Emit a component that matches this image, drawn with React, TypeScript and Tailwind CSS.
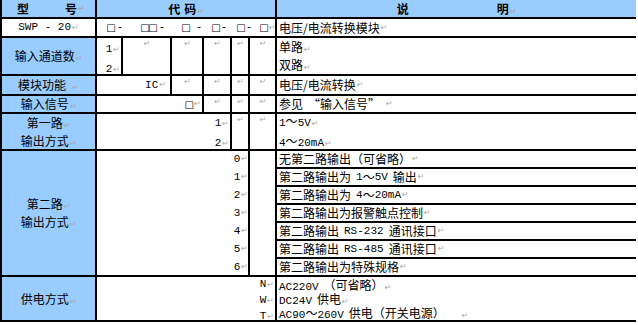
import React from 'react';

// paragraph mark, as Word shows it
const M = () => (
    <span className="font-['DejaVu_Sans'] text-[8px] leading-none text-[#a8a8a8] ml-[1px]">↵</span>
);

// latin run in the narrow typewriter face
const L = ({ children }: { children: React.ReactNode }) => (
    <span className="font-['Liberation_Mono'] text-[11px]">{children}</span>
);

const Sp = () => <span className="inline-block w-[5px]" />;

const Box = ({ className = '' }: { className?: string }) => (
    <span className={`inline-flex justify-center w-[8px] font-['DejaVu_Sans'] text-[10px] ${className}`}>□</span>
);
const Dash = ({ className = '' }: { className?: string }) => (
    <span className={`inline-flex justify-center w-[6px] font-['Liberation_Mono'] text-[11px] ${className}`}>-</span>
);

const label = 'bg-[#99ccff] flex flex-col items-center justify-center leading-[18px]';
const white = 'bg-white';
const markCell = 'bg-white flex justify-center pt-[2px] leading-[14px]';
const desc = 'bg-white flex items-center pl-[2px] whitespace-nowrap';

const secondRoute = [
    <>无第二路输出（可省略）<M /></>,
    <>第二路输出为<Sp /><L>1</L>～<L>5V</L><Sp />输出<M /></>,
    <>第二路输出为<Sp /><L>4</L>～<L>20mA</L><M /></>,
    <>第二路输出为报警触点控制<M /></>,
    <>第二路输出<Sp /><L>RS-232</L><Sp />通讯接口<M /></>,
    <>第二路输出<Sp /><L>RS-485</L><Sp />通讯接口<M /></>,
    <>第二路输出为特殊规格<M /></>,
];

export default function App() {
    return (
        <div className="w-[638px] h-[325px] bg-white font-['Noto_Sans_CJK_SC',sans-serif] text-[12px] text-black">
            <div className="w-[636px] bg-black pl-[2px] pb-[2px] grid gap-[2px] grid-cols-[93px_24px_47px_30px_26px_16px_25px_359px] grid-rows-[17px_17px_36px_18px_16px_35px_16px_16px_16px_16px_16px_16px_16px_43px]">
                {/* header */}
                <div className="bg-[#99ccff] flex items-center pl-[15px] font-bold">
                    <span>型</span>
                    <span className="ml-[36px]">号</span>
                    <M />
                </div>
                <div className="col-span-6 bg-[#99ccff] flex items-center justify-center gap-[4px] font-bold">
                    <span>代</span>
                    <span>码<M /></span>
                </div>
                <div className="bg-[#99ccff] flex items-center justify-center gap-[88px] font-bold">
                    <span>说</span>
                    <span>明<M /></span>
                </div>

                {/* SWP-20 */}
                <div className="bg-white flex items-center justify-center">
                    <L>SWP - 20</L>
                    <M />
                </div>
                <div className="col-span-6 bg-white flex items-center pl-[10px]">
                    <Box /><Dash className="ml-[2px]" />
                    <Box className="ml-[18px]" /><Box /><Dash className="ml-[2px]" />
                    <Box className="ml-[17px]" /><Dash className="ml-[6px]" />
                    <Box className="ml-[10px]" /><Dash className="ml-[1px]" />
                    <Box className="ml-[10px]" /><Dash className="ml-[1px]" />
                    <Box className="ml-[8px]" />
                    <M />
                </div>
                <div className={desc}>电压/电流转换模块<M /></div>

                {/* input channels */}
                <div className={label}><span>输入通道数<M /></span></div>
                <div className="bg-white flex flex-col items-end leading-[18px] pr-[1px]">
                    <span><L>1</L><M /></span>
                    <span><L>2</L><M /></span>
                </div>
                <div className={markCell}><M /></div>
                <div className={markCell}><M /></div>
                <div className={markCell}><M /></div>
                <div className={markCell}><M /></div>
                <div className={markCell}><M /></div>
                <div className="bg-white flex flex-col justify-center pl-[2px] leading-[18px]">
                    <span>单路<M /></span>
                    <span>双路<M /></span>
                </div>

                {/* module function */}
                <div className={label}><span>模块功能&nbsp;&nbsp;<M /></span></div>
                <div className="col-span-2 bg-white flex items-center justify-end pr-[4px]">
                    <L>IC</L><M />
                </div>
                <div className={markCell}><M /></div>
                <div className={markCell}><M /></div>
                <div className={markCell}><M /></div>
                <div className={markCell}><M /></div>
                <div className={desc}>电压/电流转换<M /></div>

                {/* input signal */}
                <div className={label}><span>输入信号<M /></span></div>
                <div className="col-span-3 bg-white flex items-center justify-end pr-[1px]">
                    <Box /><M />
                </div>
                <div className={markCell}><M /></div>
                <div className={markCell}><M /></div>
                <div className={markCell}><M /></div>
                <div className={desc}>参见<Sp />“输入信号”<Sp /><M /></div>

                {/* first output */}
                <div className={label}>
                    <span>第一路<M /></span>
                    <span>输出方式<M /></span>
                </div>
                <div className="col-span-4 bg-white flex flex-col items-end justify-center leading-[18px] pr-[1px]">
                    <span><L>1</L><M /></span>
                    <span><L>2</L><M /></span>
                </div>
                <div className={markCell}><M /></div>
                <div className={markCell}><M /></div>
                <div className="bg-white flex flex-col justify-center pl-[2px] leading-[18px]">
                    <span><L>1</L>～<L>5V</L><M /></span>
                    <span><L>4</L>～<L>20mA</L><M /></span>
                </div>

                {/* second output */}
                <div className={`row-span-7 ${label}`}>
                    <span>第二路<M /></span>
                    <span>输出方式<M /></span>
                </div>
                <div className="col-span-5 row-span-7 bg-white flex flex-col gap-[2px] items-end">
                    {[0, 1, 2, 3, 4, 5, 6].map(n => (
                        <span key={n} className="h-[16px] flex items-center"><L>{n}</L><M /></span>
                    ))}
                </div>
                <div className={`row-span-7 ${white}`} />
                {secondRoute.map((text, i) => (
                    <div key={i} className={desc}>{text}</div>
                ))}

                {/* power supply */}
                <div className={label}><span>供电方式<M /></span></div>
                <div className="col-span-6 bg-white flex flex-col items-end justify-center leading-[14px] pr-[1px]">
                    <span><L>N</L><M /></span>
                    <span><L>W</L><M /></span>
                    <span><L>T</L><M /></span>
                </div>
                <div className="bg-white flex flex-col justify-center pl-[2px] leading-[14px] whitespace-nowrap overflow-hidden">
                    <span className="h-[14px]"><L>AC220V</L><Sp />（可省略）<M /></span>
                    <span className="h-[14px]"><L>DC24V</L><Sp />供电<M /></span>
                    <span className="h-[14px]"><L>AC90</L>～<L>260V</L><Sp />供电（开关电源）<span className="inline-block w-[16px]" /><M /></span>
                </div>
            </div>
        </div>
    );
}
